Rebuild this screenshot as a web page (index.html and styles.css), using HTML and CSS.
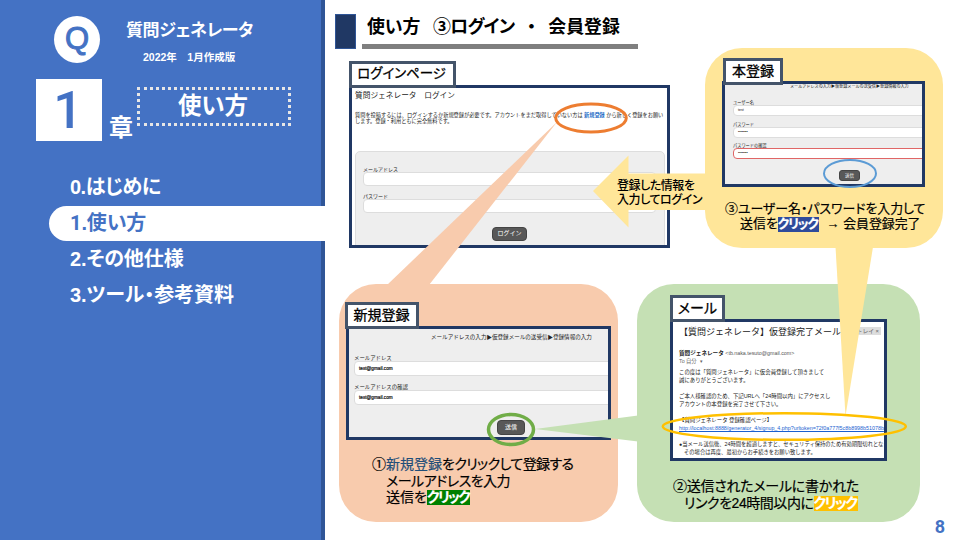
FILE: index.html
```html
<!DOCTYPE html>
<html lang="ja">
<head>
<meta charset="utf-8">
<title>質問ジェネレータ 使い方</title>
<link rel="stylesheet" href="styles.css">
</head>
<body>
<aside class="sidebar">
  <div class="brand">
    <div class="logo">Q</div>
    <div class="brand-text">
      <div class="brand-name">質問ジェネレータ</div>
      <div class="brand-date">2022年　1月作成版</div>
    </div>
  </div>
  <div class="chapter">
    <div class="chapter-no">1</div>
    <div class="chapter-unit">章</div>
    <div class="chapter-title">使い方</div>
  </div>
  <nav class="nav">
    <a class="nav-item n0">0.はじめに</a>
    <a class="nav-item n1 active"><span class="num">1</span>.使い方</a>
    <a class="nav-item n2">2.その他仕様</a>
    <a class="nav-item n3">3.ツール・参考資料</a>
  </nav>
</aside>

<main class="slide">
  <header class="header">
    <div class="marker"></div>
    <h1 class="title"><span>使い方</span><span class="kana">③ログイン</span><span>・</span><span>会員登録</span></h1>
  </header>

  <div class="row row-top">
    <section class="login">
      <h2 class="tab tab-login">ログインページ</h2>
      <div class="frame frame-login">
        <div class="login-title">質問ジェネレータ　ログイン</div>
        <p class="login-text"><span class="login-line">質問を投稿するには、ログインするか新規登録が必要です。アカウントをまだ取得していない方は <b>新規登録</b> から新しく登録をお願い</span><span class="login-line second">します。登録・利用ともに完全無料です。</span></p>
        <div class="login-form">
          <label class="label">メールアドレス</label>
          <div class="input"></div>
          <label class="label">パスワード</label>
          <div class="input"></div>
          <div class="button">ログイン</div>
        </div>
      </div>
    </section>

    <section class="card card-final">
      <h2 class="tab tab-final">本登録</h2>
      <div class="frame frame-final">
        <div class="steps">メールアドレスの入力▶仮登録メールの送受信▶登録情報の入力</div>
        <label class="label">ユーザー名</label>
        <div class="input">test</div>
        <label class="label">パスワード</label>
        <div class="input">••••••••</div>
        <label class="label">パスワードの確認</label>
        <div class="input error">••••••••</div>
        <div class="button">送信</div>
      </div>
      <div class="caption caption-final">
        <div class="c1">③ユーザー名・パスワードを入力して</div>
        <div class="c2"><span class="pre">送信を</span><mark class="navy">クリック</mark><span class="post">→ 会員登録完了</span></div>
      </div>
    </section>
  </div>

  <div class="row row-bottom">
    <section class="card card-register">
      <h2 class="tab tab-register">新規登録</h2>
      <div class="frame frame-register">
        <div class="steps">メールアドレスの入力▶仮登録メールの送受信▶登録情報の入力</div>
        <label class="label">メールアドレス</label>
        <div class="input">test@gmail.com</div>
        <label class="label">メールアドレスの確認</label>
        <div class="input">test@gmail.com</div>
        <div class="button">送信</div>
      </div>
      <div class="caption caption-register">
        <div class="c1">①<span class="ref">新規登録</span><span class="tight">をクリックして登録する</span></div>
        <div class="c2">メールアドレスを入力</div>
        <div class="c3">送信を<mark class="green">クリック</mark></div>
      </div>
    </section>

    <section class="card card-mail">
      <h2 class="tab tab-mail">メール</h2>
      <div class="frame frame-mail">
        <div class="mail-head"><span class="mail-title">【質問ジェネレータ】仮登録完了メール</span><span class="pill">受信トレイ ×</span></div>
        <div class="mail-from"><b>質問ジェネレータ</b> <span>&lt;tb.naka.tesuto@gmail.com&gt;</span></div>
        <div class="mail-to">To 自分 &nbsp;▾</div>
        <p class="mail-line l1">この度は「質問ジェネレータ」に仮会員登録して頂きまして</p>
        <p class="mail-line l2">誠にありがとうございます。</p>
        <p class="mail-line l3">ご本人様確認のため、下記URLへ「24時間以内」にアクセスし</p>
        <p class="mail-line l4">アカウントの本登録を完了させて下さい。</p>
        <p class="mail-line l5">【質問ジェネレータ 登録確認ページ】</p>
        <p class="mail-line link">http://localhost:8888/generator_4/signup_4.php?urltoken=72f0a777f5c8b8998b51078b</p>
        <p class="mail-line l6">●当メール送信後、24時間を超過しますと、セキュリティ保持のため有効期限切れとな</p>
        <p class="mail-line l7">その場合は再度、最初からお手続きをお願い致します。</p>
      </div>
      <div class="caption caption-mail">
        <div class="c1">②送信されたメールに書かれた</div>
        <div class="c2"><span class="pre">リンクを24時間以内に</span><mark class="amber">クリック</mark></div>
      </div>
    </section>
  </div>

  <div class="page-no">8</div>
</main>

<svg class="connectors" viewBox="0 0 960 540" aria-hidden="true">
  <path class="fill-peach" d="M387 285L557 122L429 285Z"/>
  <path class="fill-yellow" d="M593 191L628.500 155.500V173.500H706V210H628.500V227.500Z"/>
  <path class="fill-yellow" d="M835.500 247L845.500 416L873 247Z"/>
  <path class="fill-green" d="M638 415.500L535 429L638 441.500Z"/>
  <ellipse class="ring orange" cx="591" cy="118" rx="35.300" ry="14"/>
  <ellipse class="ring leaf" cx="511" cy="429.500" rx="22.500" ry="15"/>
  <ellipse class="ring sky" cx="850" cy="173.500" rx="26" ry="13.500"/>
  <ellipse class="ring gold" cx="784.300" cy="426.500" rx="121.500" ry="13.300"/>
</svg>
<div class="arrow-note"><div class="a1">登録した情報を</div><div class="a2">入力してログイン</div></div>
</body>
</html>
```
FILE: styles.css
```css
* { box-sizing: border-box; margin: 0; padding: 0; }
body {
  position: relative;
  display: flex;
  width: 960px;
  height: 540px;
  overflow: hidden;
  background: #fff;
  color: #000;
  font-family: "Liberation Sans", "Noto Sans CJK JP", sans-serif;
  font-feature-settings: "palt";
  white-space: nowrap;
}
b, h1, h2 { font-weight: 700; }

/* sidebar */
.sidebar {
  flex: none;
  width: 325px;
  background: linear-gradient(to right, #4472c4 321px, #2f5597 321px);
  color: #fff;
}
.brand { display: flex; height: 79px; padding: 16px 0 0 54px; }
.logo {
  width: 46px; height: 47px; border-radius: 50%;
  background: #fff; color: #4472c4;
  font-size: 31px; line-height: 45px; text-align: center;
  -webkit-text-stroke: 1px #4472c4;
}
.brand-text { margin-left: 27px; }
.brand-name { margin-left: -1px; font-size: 17px; line-height: 30px; font-weight: 700; letter-spacing: -0.400px; }
.brand-date { margin-left: 16px; font-size: 10.500px; line-height: 22px; font-weight: 700; }
.chapter { display: flex; height: 89px; padding-left: 36px; }
.chapter-no {
  width: 66px; height: 62px; padding-right: 2px; background: #fff; color: #4472c4;
  font-family: Roboto, "Liberation Sans", sans-serif;
  font-size: 52px; line-height: 63px; text-align: center; font-weight: 500;
}
.chapter-unit { width: 35px; padding: 34px 0 0 7px; font-size: 24px; line-height: 30px; font-weight: 700; }
.chapter-title {
  width: 154px; height: 39px; margin-top: 8px; padding-right: 2px;
  border: 3px dotted #e7e6e6;
  font-size: 23.500px; line-height: 33px; text-align: center; font-weight: 700;
}
.nav { display: flex; flex-direction: column; gap: 1px; padding: 2px 0 0 49px; }
.nav-item { height: 35px; padding-left: 21px; font-size: 20px; line-height: 35px; font-weight: 700; letter-spacing: -0.100px; }
.nav-item.n0 { letter-spacing: -0.500px; }
.nav-item.active { background: #fff; color: #4472c4; border-radius: 18px 0 0 18px; }
.num { font-family: Roboto, sans-serif; }

/* slide */
.slide { flex: none; width: 635px; }
.header { display: flex; height: 48px; padding: 14px 0 0 10px; }
.marker { width: 21px; height: 35px; background: #203864; border: 1px solid #2f5597; }
.title {
  display: flex; gap: 12.500px;
  width: 276px; height: 35px; margin-left: 6px; padding-left: 5px;
  border-bottom: 5px solid #7f7f7f;
  font-size: 17.900px; line-height: 26px;
}
.title .kana { letter-spacing: -0.800px; }
.row { display: flex; align-items: flex-start; }
.row-top { height: 236px; padding-left: 24px; gap: 35px; }
.row-bottom { height: 238px; padding-left: 14px; gap: 19px; }
.card { height: 100%; border-radius: 37px; }
.card-final { width: 238px; height: 200px; padding: 10px 0 0 17px; background: #ffe699; }
.card-register { width: 279px; padding: 18px 0 0 6px; background: #f8cbad; }
.card-mail { width: 283px; padding: 11px 0 0 33px; background: #c5e0b4; }
.tab {
  position: relative;
  width: max-content; height: 27px; margin-bottom: -3px;
  border: 3px solid #44546a; background: #fff;
  font-size: 14px; line-height: 20px; font-weight: 400; text-align: center;
  -webkit-text-stroke: 0.300px #000;
}
.frame { border: 3px solid #203864; background: #eee; overflow: hidden; color: #222; font-feature-settings: normal; }

.login { width: 321px; padding-top: 13px; }
.tab-login { width: 107px; font-size: 13.400px; padding-right: 2px; }
.frame-login { height: 163px; background: #fff; padding: 2px 3px 0; }
.login-title { font-size: 7.700px; line-height: 11px; }
.login-text { height: 50px; padding-top: 12px; font-size: 5.200px; line-height: 5.500px; }
.login-line { display: block; }
.login-text b { color: #2a70c8; }
.login-form {
  height: 110px; width: 310px; padding: 14px 8px 0;
  border: 1px solid #ddd; border-radius: 5px; background: #eee;
}
.label { display: block; font-size: 5px; line-height: 6px; }
.input { border: 1px solid #ddd; border-radius: 4px; background: #fff; color: #111; }
.login-form .input { height: 14px; margin-bottom: 7px; margin-left: -1px; }
.login-form .label { margin-left: -1px; }
.button {
  border: 1px solid #444; border-radius: 4px; background: #585858; color: #fff; text-align: center;
}
.login-form .button { width: 35px; height: 14px; margin: 14px auto 0 128px; font-size: 6px; line-height: 11px; }

.tab-final { margin-left: 1px; width: 60px; margin-bottom: -4px; }
.frame-final { width: 203px; height: 106px; padding: 0 0 0 8px; }
.frame-final .steps { padding-left: 57px; font-size: 4.100px; line-height: 6px; height: 16px; }
.frame-final .label { font-size: 4.200px; line-height: 5px; }
.frame-final .input { width: 230px; height: 11px; margin-bottom: 5.500px; padding-left: 4px; font-size: 3.500px; line-height: 8px; }
.frame-final .input.error { border-color: #e06666; }
.frame-final .button { width: 21px; height: 11px; margin: 11px 0 0 106px; font-size: 4.500px; line-height: 9px; border-radius: 3px; }

.tab-register { width: 74px; padding-right: 1px; }
.frame-register { width: 265px; height: 114px; margin-left: 1px; padding: 4px 0 0 5px; }
.frame-register .steps { height: 22px; padding-left: 77px; font-size: 5.550px; line-height: 9px; }
.frame-register .label { font-size: 5.400px; }
.frame-register .input { width: 300px; height: 15px; margin-bottom: 8px; padding-left: 4px; font-size: 4.700px; line-height: 14px; -webkit-text-stroke: 0.200px #111; }
.frame-register .button { width: 28px; height: 15px; margin: 15px 0 0 143px; font-size: 6px; line-height: 13px; }

.tab-mail { width: 55px; }
.frame-mail { width: 217px; height: 142px; padding: 2px 0 0 6px; background: #fff; }
.mail-head { display: flex; align-items: center; height: 14px; margin-bottom: 11px; }
.mail-title { width: 164px; font-size: 9px; }
.pill { padding: 0 2px; background: #ddd; font-size: 5.800px; line-height: 8px; color: #666; }
.mail-from { font-size: 5.600px; line-height: 8px; }
.mail-from span { font-size: 5.300px; color: #555; }
.mail-to { height: 11px; font-size: 5.300px; line-height: 8px; color: #666; }
.mail-line { font-size: 5.400px; line-height: 8px; }
.mail-line.l3, .mail-line.l5, .mail-line.l6 { margin-top: 8px; }
.mail-line.link { font-size: 5.350px; color: #1a5fd0; text-decoration: underline; }
.mail-line.l6 { font-size: 5.300px; }
.mail-line.l7 { padding-left: 5px; font-size: 5.300px; }

.caption { font-size: 14px; line-height: 16.500px; -webkit-text-stroke: 0.200px currentColor; }
.caption mark {
  display: inline-block; width: 43px; height: 15px; line-height: 14px;
  color: #fff; font-weight: 700; letter-spacing: -1.700px;
}
.caption .navy { width: 41px; letter-spacing: -1.300px; background: #2f4b9b; }
.green { background: #008000; }
.caption .amber { width: 44px; background: #ffc000; letter-spacing: -1.500px; }
.ref { color: #1f4e79; }
.tight { letter-spacing: -0.600px; }
.caption-final { padding: 14px 0 0 3px; font-size: 12.900px; line-height: 15px; }
.caption-final .c2 { padding-left: 15px; }
.caption-final .post { margin-left: 8px; }
.caption-register { padding: 16px 0 0 27px; }
.caption-register .c2 { padding-left: 14px; letter-spacing: -0.500px; }
.caption-register .c3 { padding-left: 14px; }
.caption-mail { padding: 17px 0 0 3px; letter-spacing: -0.250px; }
.caption-mail .c2 { padding-left: 11px; letter-spacing: -0.450px; }
.page-no {
  margin-top: -5px; padding-right: 15px; text-align: right;
  font-family: Roboto, sans-serif; font-size: 18px; line-height: 20px; font-weight: 700; color: #4472c4;
}

/* callout tails and rings drawn over the cards */
.connectors { position: absolute; left: 0; top: 0; width: 960px; height: 540px; }
.fill-peach { fill: #f8cbad; }
.fill-yellow { fill: #ffe699; }
.fill-green { fill: #c5e0b4; }
.ring { fill: none; }
.orange { stroke: #ed7d31; stroke-width: 3; }
.leaf { stroke: #70ad47; stroke-width: 3.500; }
.sky { stroke: #5b9bd5; stroke-width: 2; }
.gold { stroke: #ffc000; stroke-width: 2.500; }
.arrow-note { position: absolute; left: 617px; top: 179px; font-size: 12px; line-height: 14px; font-weight: 500; letter-spacing: -0.450px; }
```
